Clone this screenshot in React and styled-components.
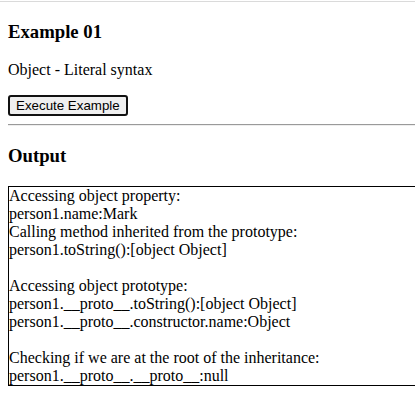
import React from 'react'
import styled, { createGlobalStyle } from 'styled-components'

const GlobalStyle = createGlobalStyle`
	html, body {
		margin: 0;
		overflow: hidden;
		background: #fff;
	}
	body {
		font-family: "Liberation Serif", "Times New Roman", serif;
		font-size: 16px;
		color: #000;
	}
`

const Page = styled.div`
	padding: 0 8px;
`

const TopRule = styled.div`
	height: 1px;
	margin: 1px -8px 0;
	background-color: #dadada;
`

const Title = styled.h3`
	font-size: 18.72px;
	font-weight: 700;
	margin: 18.72px 0;
`

const Description = styled.p`
	margin: 16px 0;
`

const Actions = styled.div`
	display: flex;
`

const Button = styled.button`
	font-family: "Liberation Sans", Arial, sans-serif;
	font-size: 13.33px;
	color: #000;
	background-color: #efefef;
	border: 2px solid #111;
	border-radius: 3px;
	padding: 1px 6px;
	height: 21px;
	line-height: 15px;
`

const Divider = styled.hr`
	margin: 8px -8px 8px 0;
	border: none;
	border-top: 1px solid #9a9a9a;
	border-bottom: 1px solid #eeeeee;
`

const OutputBox = styled.div`
	width: 460px;
	border: 1px solid #000;
	line-height: 18px;
`

const Line = styled.div`
	min-height: 18px;
	white-space: pre;
`

const lines = [
	'Accessing object property:',
	'person1.name:Mark',
	'Calling method inherited from the prototype:',
	'person1.toString():[object Object]',
	'',
	'Accessing object prototype:',
	'person1.__proto__.toString():[object Object]',
	'person1.__proto__.constructor.name:Object',
	'',
	'Checking if we are at the root of the inheritance:',
	'person1.__proto__.__proto__:null',
]

function App() {
	return (
		<>
			<GlobalStyle />
			<TopRule />
			<Page>
				<Title>Example 01</Title>
				<Description>Object - Literal syntax</Description>
				<Actions>
					<Button>Execute Example</Button>
				</Actions>
				<Divider />
				<Title>Output</Title>
				<OutputBox>
					{lines.map((text, i) => (
						<Line key={i}>{text}</Line>
					))}
				</OutputBox>
			</Page>
		</>
	)
}

export default App
